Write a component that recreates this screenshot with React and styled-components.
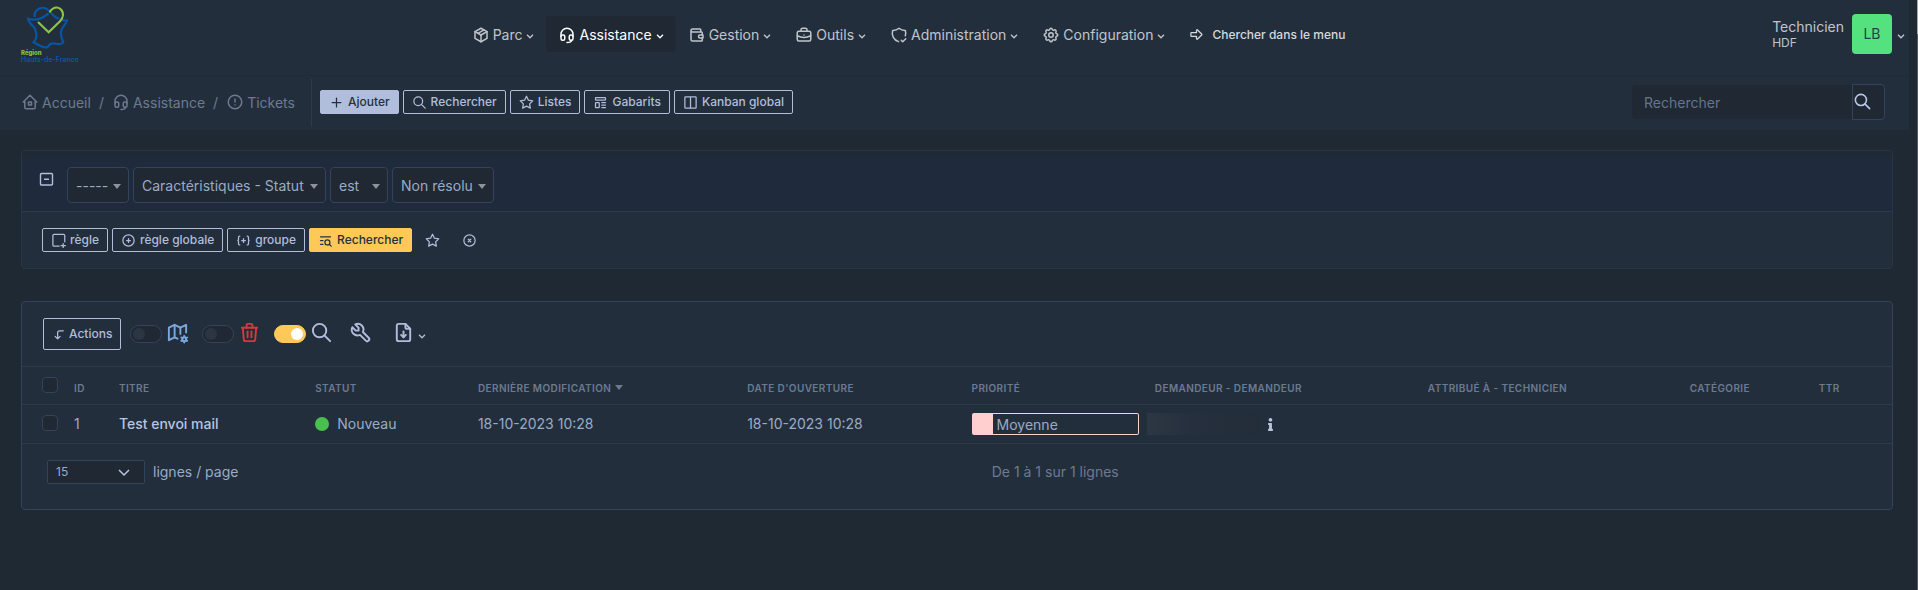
import React from "react";
import styled, { createGlobalStyle, css } from "styled-components";
import {
  TbPackage, TbHeadset, TbWallet, TbBriefcase, TbShieldCheck, TbSettings, TbArrowBigRight,
  TbHome2, TbAlertCircle, TbPlus, TbSearch, TbStar, TbTemplate, TbColumns2,
  TbCirclePlus, TbCodePlus, TbListSearch, TbCircleX, TbCornerLeftDown, TbMapCog, TbTrash,
  TbTool, TbFileDownload,
} from "react-icons/tb";
import { FaInfo } from "react-icons/fa";

const c = {
  page: "#1f2934",
  bar: "#232e3c",
  field: "#1f2833",
  query: "#1f2a3c",
  line: "#2d3a4b",
  edge: "#33435a",
  text: "#9aabc6",
  strong: "#b7c5e0",
  muted: "#6c7a90",
  nav: "#c0c5cc",
  accent: "#ffc857",
  outline: "#b0bddb",
};

const GlobalStyle = createGlobalStyle`
  *, *::before, *::after { box-sizing: border-box; }
  body {
    margin: 0;
    background: ${c.page};
    color: ${c.text};
    font: 14px/20px Inter, "Liberation Sans", sans-serif;
  }
  button, input, select { font: inherit; color: inherit; margin: 0; }
  svg { flex: none; display: block; }
`;

const Page = styled.div`
  display: grid;
  grid-template-columns: minmax(0, 1fr) 1px;
  min-height: 100vh;
`;

const ScrollTrack = styled.div`
  background: linear-gradient(#a4a8ad 34px, #55595f 34px);
`;

const Header = styled.header`
  margin-right: 8px;
  background: ${c.bar};
`;

const TopBar = styled.div`
  display: flex;
  align-items: flex-start;
  height: 76px;
  padding: 0 4px 0 21px;
  border-bottom: 1px solid #212b37;
`;

const Brand = styled.a`
  display: flex;
  flex-direction: column;
  width: 72px;
  padding-top: 6px;
  color: #0756a6;
  font-size: 7px;
  line-height: 7px;
  font-weight: 600;
  text-decoration: none;
  white-space: nowrap;
  svg { margin-left: 6px; }
`;

const BrandRegion = styled.span`
  color: #8cc63e;
  font-size: 6px;
  font-weight: 800;
`;

const Nav = styled.nav`
  display: flex;
  margin: 16px auto 0;
  padding-right: 48px;
`;

const NavLink = styled.a`
  display: flex;
  align-items: center;
  gap: 3px;
  height: 36px;
  padding: 1px 12px 0;
  border-radius: 4px;
  color: ${(p) => (p.$active ? "#fff" : c.nav)};
  background: ${(p) => (p.$active ? c.field : "transparent")};
  text-decoration: none;
`;

const MenuSearch = styled.button`
  display: flex;
  align-items: center;
  gap: 8px;
  padding: 1px 12px 0;
  border: 0;
  background: none;
  color: #d3d8df;
  font-size: 12px;
  font-weight: 500;
`;

const CaretSvg = styled.svg`
  margin: 4px 0 0 1px;
`;

const User = styled.button`
  display: flex;
  align-items: center;
  gap: 4px;
  margin-top: 14px;
  padding: 0;
  border: 0;
  background: none;
  color: ${c.nav};
  text-align: left;
`;

const UserName = styled.span`
  display: grid;
  margin-right: 4px;
  padding-top: 2px;
  line-height: 16px;
  small { font-size: 12px; }
`;

const Avatar = styled.span`
  display: grid;
  place-items: center;
  width: 40px;
  height: 40px;
  border-radius: 4px;
  background: #53e27d;
  color: #27414a;
`;

const SubBar = styled.div`
  display: flex;
  align-items: center;
  height: 54px;
  padding: 0 24px 0 21px;
`;

const Breadcrumb = styled.nav`
  display: flex;
  align-items: center;
  gap: 8px;
  height: 48px;
  padding-right: 16px;
  border-right: 1px solid ${c.line};
  color: ${c.muted};
`;

const Crumb = styled.a`
  display: flex;
  align-items: center;
  gap: 3px;
  color: inherit;
  text-decoration: none;
  svg { margin-bottom: 3px; }
`;

const ButtonRow = styled.div`
  display: flex;
  align-items: center;
  gap: 4px;
  padding: ${(p) => p.$pad || 0};
`;

const Button = styled.button`
  display: inline-flex;
  align-items: center;
  gap: ${(p) => (p.$tall ? 2 : 4)}px;
  height: ${(p) => (p.$tall ? 32 : 24)}px;
  padding: 0 8px;
  border: 1px solid ${c.outline};
  border-radius: 2px;
  background: transparent;
  color: ${c.outline};
  font-size: 12px;
  font-weight: 500;
  white-space: nowrap;
  ${(p) => p.$kind === "solid" && css`background: ${c.outline}; color: #243041;`}
  ${(p) => p.$kind === "accent" && css`background: ${c.accent}; border-color: ${c.accent}; color: #243041;`}
  ${(p) => p.$kind === "ghost" && css`border-color: transparent;`}
`;

const SearchForm = styled.form`
  display: flex;
  align-items: center;
  margin-left: auto;
  padding-bottom: 2px;
`;

const SearchInput = styled.input`
  width: 220px;
  height: 34px;
  padding: 0 12px;
  border: 0;
  border-radius: 4px 0 0 4px;
  background: ${c.field};
  &::placeholder { color: #66758c; opacity: 1; }
`;

const SearchButton = styled.button`
  width: 33px;
  height: 36px;
  padding: 0 0 2px;
  border: 1px solid ${c.edge};
  border-radius: 0 4px 4px 0;
  background: ${c.field};
  color: #b9c8e8;
`;

const Main = styled.main`
  display: grid;
  gap: 32px;
  padding: 20px 24px 24px 21px;
`;

const Card = styled.section`
  border: 1px solid ${(p) => (p.$soft ? "#293544" : c.edge)};
  border-radius: 4px;
  background: ${c.bar};
  overflow: hidden;
`;

const Criteria = styled.div`
  display: flex;
  align-items: flex-start;
  gap: 12px;
  height: 61px;
  padding: 16px 16px 8px;
  border-bottom: 1px solid ${c.line};
  background: linear-gradient(${c.page}, ${c.query} 9px);
`;

const IconButton = styled.button`
  display: flex;
  align-items: center;
  gap: 2px;
  padding: 0;
  border: 0;
  background: none;
  color: ${c.outline};
`;

const CollapseButton = styled(IconButton)`
  padding: 4px 0 0;
`;

const SelectBox = styled.label`
  display: inline-grid;
  align-items: center;
  width: ${(p) => p.$width}px;
  > * { grid-area: 1 / 1; }
  > svg { justify-self: end; margin: 2px 8px 0 0; pointer-events: none; }
`;

const Select = styled.select`
  appearance: none;
  width: 100%;
  height: ${(p) => (p.$small ? 24 : 36)}px;
  padding: ${(p) => (p.$small ? "0 8px" : "2px 8px 0")};
  border: 1px solid ${c.edge};
  border-radius: ${(p) => (p.$small ? 2 : 4)}px;
  background: ${c.field};
  color: ${c.text};
  font-size: ${(p) => (p.$small ? 12 : 14)}px;
`;

const Toolbar = styled.div`
  display: flex;
  align-items: center;
  height: 64px;
  padding: 0 21px;
`;

const ToggleLabel = styled.label`
  display: flex;
  align-items: center;
  gap: 4px;
  margin-left: ${(p) => p.$gap}px;
  color: ${(p) => p.$color};
  svg { margin-bottom: 4px; }
`;

const Toggle = styled.input`
  appearance: none;
  display: flex;
  align-items: center;
  width: 32px;
  height: 18px;
  margin: 0;
  padding: 0 2px;
  border: 1px solid ${c.edge};
  border-radius: 9px;
  background: ${c.field};
  &::before {
    content: "";
    width: 12px;
    height: 12px;
    border-radius: 50%;
    background: #2c3542;
  }
  &:checked {
    justify-content: flex-end;
    border-color: ${c.accent};
    background: ${c.accent};
  }
  &:checked::before { background: #fff; }
`;

const ToolButton = styled(IconButton)`
  margin-left: ${(p) => p.$gap}px;
  svg:first-child { margin-bottom: 3px; }
`;

const Table = styled.table`
  width: 100%;
  table-layout: fixed;
  border-collapse: collapse;
  white-space: nowrap;
`;

const Th = styled.th`
  height: 38px;
  padding: 4px 8px 0;
  border-top: 1px solid ${c.line};
  color: ${c.muted};
  font-size: 10px;
  line-height: 16px;
  font-weight: 600;
  letter-spacing: 0.04em;
  text-align: left;
  text-transform: uppercase;
`;

const Td = styled.td`
  height: 39px;
  padding: ${(p) => (p.$flush ? "0 8px 0 0" : "0 8px")};
  border-top: 1px solid ${c.line};
  border-bottom: 1px solid ${c.line};
`;

const CheckTh = styled(Th)`
  padding: 0 0 2px 20px;
`;

const CheckTd = styled(Td)`
  padding: 0 0 2px 20px;
`;

const Checkbox = styled.input`
  appearance: none;
  display: block;
  width: 16px;
  height: 16px;
  margin: 0;
  border: 1px solid ${c.edge};
  border-radius: 4px;
  background: ${c.field};
`;

const Sort = styled.span`
  display: inline-flex;
  align-items: center;
  gap: 4px;
`;

const TitleLink = styled.a`
  color: ${c.strong};
  font-weight: 500;
  text-decoration: none;
`;

const Status = styled.span`
  display: flex;
  align-items: center;
  gap: 8px;
  &::before {
    content: "";
    width: 14px;
    height: 14px;
    border-radius: 50%;
    background: #49bf4d;
  }
`;

const Priority = styled.span`
  display: block;
  height: 22px;
  padding-left: 4px;
  border: 1px solid #ffcfcf;
  border-left-width: 21px;
  border-radius: 2px;
  line-height: 22px;
`;

const Requester = styled.span`
  display: flex;
  align-items: center;
  gap: 4px;
  color: ${c.strong};
`;

const HiddenName = styled.span`
  width: 113px;
  height: 22px;
  background: linear-gradient(90deg, #2d3744, #262f3d 40%, #232d3a);
`;

const Footer = styled.div`
  display: flex;
  align-items: center;
  gap: 8px;
  height: 65px;
  padding: 0 28px 10px 25px;
`;

const PageInfo = styled.span`
  margin: 0 auto;
  color: ${c.muted};
`;

const Caret = () => (
  <CaretSvg width="8" height="5" viewBox="0 0 8 5" fill="none" stroke="currentColor" strokeWidth="1.3" aria-hidden="true">
    <path d="M1 .8l3 3 3-3" />
  </CaretSvg>
);

const Triangle = ({ color = "#8f9296" }) => (
  <svg width="8" height="5" viewBox="0 0 8 5" fill={color} aria-hidden="true">
    <path d="M0 0h8L4 5z" />
  </svg>
);

const SquareMinus = () => (
  <svg width="17" height="17" viewBox="0 0 17 17" fill="none" stroke="currentColor" strokeWidth="1.4" aria-hidden="true">
    <rect x="2.500" y="2.500" width="12" height="11.500" rx="1" />
    <path d="M6 8.300h5" />
  </svg>
);

const RulePlus = () => (
  <svg width="15" height="15" viewBox="0 0 24 24" fill="none" stroke="currentColor" strokeWidth="2" strokeLinecap="round" strokeLinejoin="round" aria-hidden="true">
    <path d="M13 21H5a2 2 0 0 1-2-2V4a2 2 0 0 1 2-2h15a2 2 0 0 1 2 2v10M16 20h7M19.500 17v7" />
  </svg>
);

const Logo = () => (
  <svg width="42" height="43" viewBox="81 18 126 129" fill="none" stroke="#0756a6" strokeWidth="6.500" aria-hidden="true">
    <path d="M104 51C101 28 130 12 149 34C160 47 166 54 178 56M202 58C201 73 184 79 183 97C182 111 186 118 190 127C180 139 165 127 155 131C144 134 147 140 141 142C126 144 112 132 101 127C112 115 110 98 104 85C98 72 86 73 84 56C105 63 126 57 146 40M202 63L186 60" />
    <path stroke="#8cc63e" d="M114 66L146 97L180 64C202 38 178 14 159 26Q152 30 149 37" />
  </svg>
);

const menu = [
  ["Parc", TbPackage],
  ["Assistance", TbHeadset],
  ["Gestion", TbWallet],
  ["Outils", TbBriefcase],
  ["Administration", TbShieldCheck],
  ["Configuration", TbSettings],
];

const criteria = [
  ["Lien logique", "-----", 62],
  ["Champ", "Caractéristiques - Statut", 193],
  ["Opérateur", "est", 58],
  ["Valeur", "Non résolu", 102],
];

const columns = [
  ["ID", "2.4%"],
  ["Titre", "10.5%"],
  ["Statut", "8.7%"],
  ["Dernière modification", "14.4%"],
  ["Date d'ouverture", "12%"],
  ["Priorité", "9.8%"],
  ["Demandeur - Demandeur", "14.6%"],
  ["Attribué à - Technicien", "14%"],
  ["Catégorie", "6.9%"],
  ["TTR", "auto"],
];

export default function App() {
  return (
    <>
      <GlobalStyle />
      <Page>
        <div>
          <Header>
            <TopBar>
              <Brand href="#" aria-label="Région Hauts-de-France">
                <Logo />
                <BrandRegion>Région</BrandRegion>
                <span>Hauts-de-France</span>
              </Brand>
              <Nav>
                {menu.map(([name, Icon]) => (
                  <NavLink key={name} href="#" $active={name === "Assistance"}>
                    <Icon size={18} />
                    {name}
                    <Caret />
                  </NavLink>
                ))}
                <MenuSearch type="button">
                  <TbArrowBigRight size={15} />
                  Chercher dans le menu
                </MenuSearch>
              </Nav>
              <User type="button">
                <UserName>
                  Technicien
                  <small>HDF</small>
                </UserName>
                <Avatar>LB</Avatar>
                <Caret />
              </User>
            </TopBar>
            <SubBar>
              <Breadcrumb aria-label="Fil d'Ariane">
                <Crumb href="#"><TbHome2 size={18} />Accueil</Crumb>
                <span>/</span>
                <Crumb href="#"><TbHeadset size={18} />Assistance</Crumb>
                <span>/</span>
                <Crumb href="#"><TbAlertCircle size={18} />Tickets</Crumb>
              </Breadcrumb>
              <ButtonRow $pad="0 0 2px 8px">
                <Button $kind="solid"><TbPlus size={15} />Ajouter</Button>
                <Button><TbSearch size={15} />Rechercher</Button>
                <Button><TbStar size={15} />Listes</Button>
                <Button><TbTemplate size={15} />Gabarits</Button>
                <Button><TbColumns2 size={15} />Kanban global</Button>
              </ButtonRow>
              <SearchForm role="search">
                <SearchInput placeholder="Rechercher" aria-label="Rechercher" />
                <SearchButton type="button" aria-label="Lancer la recherche"><TbSearch size={19} /></SearchButton>
              </SearchForm>
            </SubBar>
          </Header>

          <Main>
            <Card $soft>
              <Criteria>
                <CollapseButton aria-label="Replier"><SquareMinus /></CollapseButton>
                <ButtonRow>
                  {criteria.map(([label, value, width]) => (
                    <SelectBox key={label} $width={width}>
                      <Select aria-label={label}><option>{value}</option></Select>
                      <Triangle />
                    </SelectBox>
                  ))}
                </ButtonRow>
              </Criteria>
              <ButtonRow $pad="16px 20px">
                <Button><RulePlus />règle</Button>
                <Button><TbCirclePlus size={15} />règle globale</Button>
                <Button><TbCodePlus size={15} />groupe</Button>
                <Button $kind="accent"><TbListSearch size={15} />Rechercher</Button>
                <Button $kind="ghost" aria-label="Sauvegarder"><TbStar size={15} /></Button>
                <Button $kind="ghost" aria-label="Réinitialiser"><TbCircleX size={15} /></Button>
              </ButtonRow>
            </Card>

            <Card>
              <Toolbar>
                <Button $tall><TbCornerLeftDown size={15} />Actions</Button>
                <ToggleLabel $gap={9} $color="#7aa7e0">
                  <Toggle type="checkbox" aria-label="Carte" />
                  <TbMapCog size={23} />
                </ToggleLabel>
                <ToggleLabel $gap={13} $color="#d63939">
                  <Toggle type="checkbox" aria-label="Corbeille" />
                  <TbTrash size={23} />
                </ToggleLabel>
                <ToggleLabel $gap={13} $color={c.outline}>
                  <Toggle type="checkbox" aria-label="Recherche" defaultChecked />
                  <TbSearch size={23} />
                </ToggleLabel>
                <ToolButton $gap={16} aria-label="Colonnes"><TbTool size={23} /></ToolButton>
                <ToolButton $gap={20} aria-label="Exporter"><TbFileDownload size={23} /><Caret /></ToolButton>
              </Toolbar>

              <Table>
                <colgroup>
                  <col style={{ width: 44 }} />
                  {columns.map(([name, width]) => <col key={name} style={{ width }} />)}
                </colgroup>
                <thead>
                  <tr>
                    <CheckTh><Checkbox type="checkbox" aria-label="Tout sélectionner" /></CheckTh>
                    {columns.map(([name]) => (
                      <Th key={name}>
                        {name === "Dernière modification"
                          ? <Sort>{name}<Triangle color={c.muted} /></Sort>
                          : name}
                      </Th>
                    ))}
                  </tr>
                </thead>
                <tbody>
                  <tr>
                    <CheckTd><Checkbox type="checkbox" aria-label="Sélectionner le ticket 1" /></CheckTd>
                    <Td>1</Td>
                    <Td><TitleLink href="#">Test envoi mail</TitleLink></Td>
                    <Td><Status>Nouveau</Status></Td>
                    <Td>18-10-2023 10:28</Td>
                    <Td>18-10-2023 10:28</Td>
                    <Td><Priority>Moyenne</Priority></Td>
                    <Td $flush><Requester><HiddenName /><FaInfo size={13} /></Requester></Td>
                    <Td />
                    <Td />
                    <Td />
                  </tr>
                </tbody>
              </Table>

              <Footer>
                <SelectBox $width={98}>
                  <Select $small aria-label="Lignes par page"><option>15</option></Select>
                  <svg width="20" height="12" viewBox="0 0 20 12" fill="none" stroke={c.strong} strokeWidth="1.500" aria-hidden="true">
                    <path d="M2 3l5 5 5-5" />
                  </svg>
                </SelectBox>
                <span>lignes / page</span>
                <PageInfo>De 1 à 1 sur 1 lignes</PageInfo>
              </Footer>
            </Card>
          </Main>
        </div>
        <ScrollTrack />
      </Page>
    </>
  );
}
